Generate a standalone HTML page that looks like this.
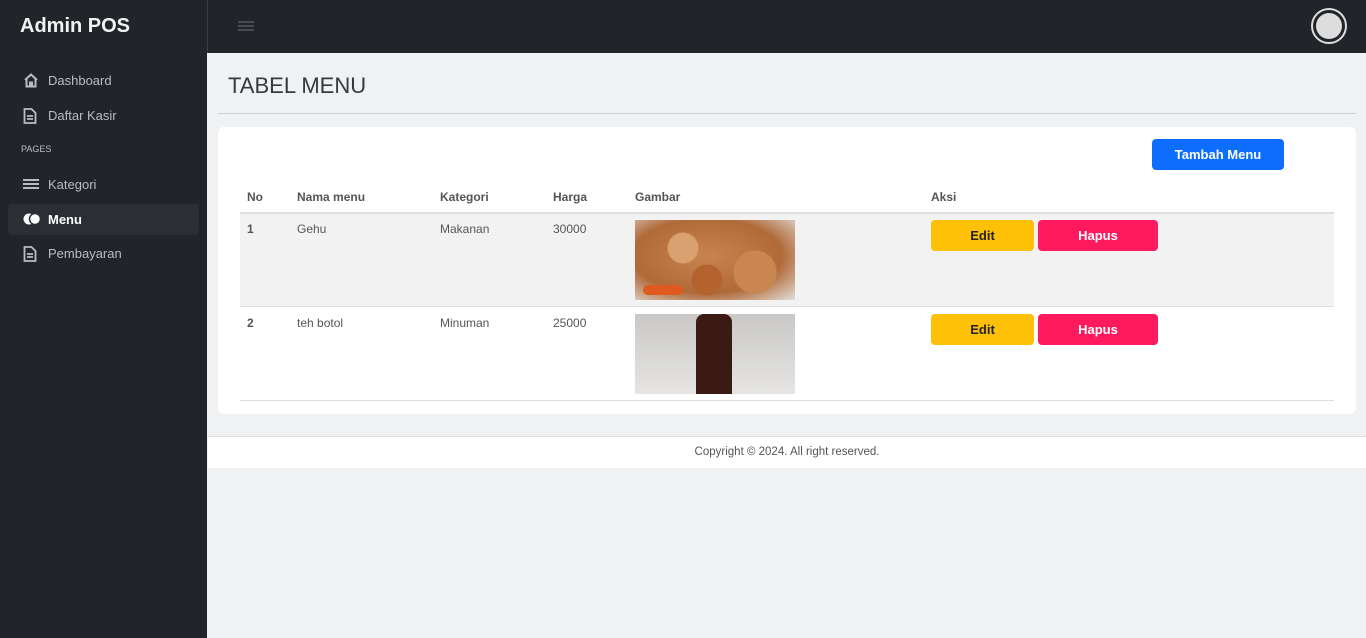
<!DOCTYPE html>
<html><head><meta charset="utf-8"><style>
*{box-sizing:border-box;margin:0;padding:0}
body{width:1366px;height:638px;background:#f0f1f3;font-family:"Liberation Sans",sans-serif;position:relative;overflow:hidden}
.sb{position:absolute;left:0;top:0;width:207px;height:638px;background:#212529}
.brand{position:absolute;left:20px;top:15px;color:#f2f2f2;font-size:20px;font-weight:bold}
.it{position:absolute;left:8px;width:191px;height:31px;color:#b9bcc0;font-size:13px;padding-left:40px;line-height:31px}
.it svg{position:absolute;left:15px;top:8px}
.act{background:#2b2f34;color:#fff;border-radius:4px;font-weight:bold}
.pages{position:absolute;left:21px;top:144px;font-size:9px;color:#b9bcc0}
.top{position:absolute;left:207px;top:0;width:1159px;height:53px;background:#212529;border-left:1px solid #3c4046}
.av{position:absolute;right:19px;top:8px;width:36px;height:36px;border-radius:50%;border:2px solid #ddd;padding:3px;background:#212529}
.av div{width:100%;height:100%;border-radius:50%;background:#ddd}
h1{position:absolute;left:228px;top:73px;font-size:22px;font-weight:normal;color:#343a40}
.hr{position:absolute;left:218px;top:113px;width:1138px;height:1px;background:#cfd1d4}
.card{position:absolute;left:218px;top:127px;width:1138px;height:287px;background:#fff;border-radius:6px}
.btn{position:absolute;border-radius:4px;color:#fff;font-size:13px;font-weight:bold;text-align:center}
.t{position:absolute;font-size:12px;color:#555}
.th{font-weight:bold;color:#555}
.row{position:absolute;left:240px;width:1094px}
.foot{position:absolute;left:208px;top:436px;width:1158px;height:32px;background:#fff;border-top:1px solid #dcdcdc;text-align:center;font-size:11.5px;color:#555;line-height:31px}
</style></head><body>
<div class="sb">
<div class="brand">Admin POS</div>
<div class="it" style="top:65px"><svg width="16" height="15" viewBox="0 0 16 15"><path d="M2 7L8 1.5 14 7M3.5 6v7.5h3.5v-4h2v4h3.5V6" fill="none" stroke="#b9bcc0" stroke-width="2"/></svg>Dashboard</div>
<div class="it" style="top:100px"><svg width="14" height="16" viewBox="0 0 14 16"><path d="M1.5 1h7l4 4v10h-11z M4 8h6M4 11h6" fill="none" stroke="#b9bcc0" stroke-width="1.8"/></svg>Daftar Kasir</div>
<div class="pages">PAGES</div>
<div class="it" style="top:169px"><svg width="16" height="14" viewBox="0 0 16 14"><path d="M0 3h16M0 7h16M0 11h16" stroke="#b9bcc0" stroke-width="2"/></svg>Kategori</div>
<div class="it act" style="top:204px"><svg width="18" height="14" viewBox="0 0 18 14"><circle cx="6" cy="7" r="5.5" fill="#fff"/><circle cx="12" cy="7" r="5.5" fill="#fff" stroke="#2b2f34" stroke-width="1.5"/></svg>Menu</div>
<div class="it" style="top:238px"><svg width="14" height="16" viewBox="0 0 14 16"><path d="M1.5 1h7l4 4v10h-11z M4 8h6M4 11h6" fill="none" stroke="#b9bcc0" stroke-width="1.8"/></svg>Pembayaran</div>
</div>
<div class="top"><svg style="position:absolute;left:30px;top:20px" width="16" height="12"><path d="M0 2h16M0 6h16M0 10h16" stroke="#555a60" stroke-width="1.5"/></svg><div class="av"><div></div></div></div>
<h1>TABEL MENU</h1>
<div class="hr"></div>
<div class="card"></div>
<div class="btn" style="left:1152px;top:139px;width:132px;height:31px;line-height:31px;background:#0d6efd">Tambah Menu</div>
<div class="t th" style="left:247px;top:190px">No</div>
<div class="t th" style="left:297px;top:190px">Nama menu</div>
<div class="t th" style="left:440px;top:190px">Kategori</div>
<div class="t th" style="left:553px;top:190px">Harga</div>
<div class="t th" style="left:635px;top:190px">Gambar</div>
<div class="t th" style="left:931px;top:190px">Aksi</div>
<div class="row" style="top:212px;height:95px;background:#f2f2f2;border-top:2px solid #dedede;border-bottom:1px solid #dedede"></div>
<div class="row" style="top:400px;height:1px;background:#dedede"></div>
<div class="t" style="left:247px;top:222px;font-weight:bold">1</div>
<div class="t" style="left:297px;top:222px">Gehu</div>
<div class="t" style="left:440px;top:222px">Makanan</div>
<div class="t" style="left:553px;top:222px">30000</div>
<div style="position:absolute;left:635px;top:220px;width:160px;height:80px;background:radial-gradient(circle at 30% 35%,#d9a070 0 12%,transparent 13%),radial-gradient(circle at 75% 65%,#c9874f 0 16%,transparent 17%),radial-gradient(circle at 45% 75%,#b4622e 0 14%,transparent 15%),radial-gradient(ellipse at 45% 45%,#c88450 0%,#b06a38 60%,#e4e0de 100%)"><div style="position:absolute;left:8px;top:65px;width:40px;height:10px;background:#e05a20;border-radius:5px"></div></div>
<div class="t" style="left:247px;top:316px;font-weight:bold">2</div>
<div class="t" style="left:297px;top:316px">teh botol</div>
<div class="t" style="left:440px;top:316px">Minuman</div>
<div class="t" style="left:553px;top:316px">25000</div>
<div style="position:absolute;left:635px;top:314px;width:160px;height:80px;background:linear-gradient(#c9c8c6,#e6e5e3)"><div style="position:absolute;left:61px;top:0;width:36px;height:80px;background:#3a1a12;border-radius:8px 8px 0 0"></div></div>
<div class="btn" style="left:931px;top:220px;width:103px;height:31px;line-height:31px;background:#ffc107;color:#222">Edit</div>
<div class="btn" style="left:1038px;top:220px;width:120px;height:31px;line-height:31px;background:#ff1a5e">Hapus</div>
<div class="btn" style="left:931px;top:314px;width:103px;height:31px;line-height:31px;background:#ffc107;color:#222">Edit</div>
<div class="btn" style="left:1038px;top:314px;width:120px;height:31px;line-height:31px;background:#ff1a5e">Hapus</div>
<div class="foot">Copyright © 2024. All right reserved.</div>
</body></html>
